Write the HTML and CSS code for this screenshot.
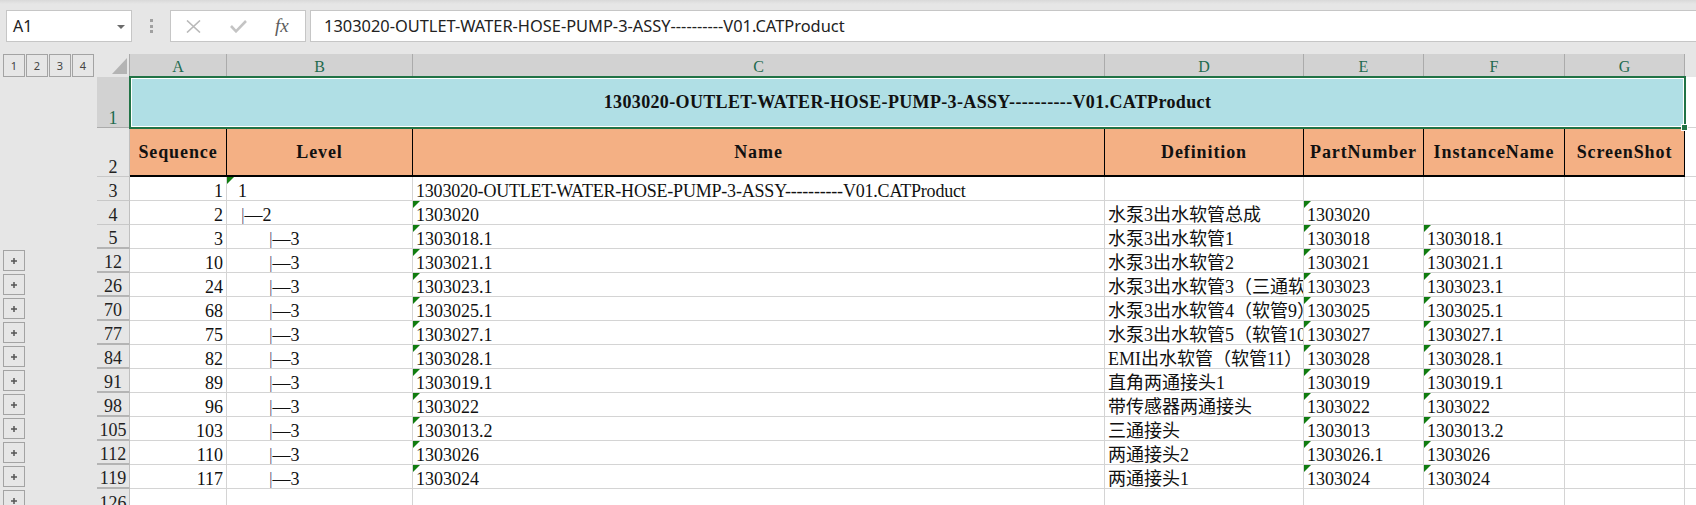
FILE: index.html
```html
<!DOCTYPE html>
<html lang="zh">
<head>
<meta charset="utf-8">
<title>Sheet</title>
<link rel="stylesheet" href="styles.css">
</head>
<body>
<div class="fbar">
  <div class="namebox"><span>A1</span><svg class="nb-arrow" width="8" height="4" viewBox="0 0 8 4"><polygon points="0,0 8,0 4,4" fill="#6b6b6b"/></svg></div>
  <div class="grip"><i></i><i></i><i></i></div>
  <div class="fxbox">
    <svg class="ic-x" width="15" height="13" viewBox="0 0 15 13"><path d="M1 0.5 L14 12.5 M14 0.5 L1 12.5" stroke="#b9b9b9" stroke-width="1.6" fill="none"/></svg>
    <svg class="ic-ok" width="17" height="14" viewBox="0 0 17 14"><path d="M1 7 L6 12.3 L16 2" stroke="#c4c4c4" stroke-width="2.6" fill="none"/></svg>
    <span class="fx">fx</span>
  </div>
  <div class="finput">1303020-OUTLET-WATER-HOSE-PUMP-3-ASSY----------V01.CATProduct</div>
</div>

<div class="sheet">
  <div class="row r-colhdr">
    <div class="ol levels"><span class="lvbtn">1</span><span class="lvbtn">2</span><span class="lvbtn">3</span><span class="lvbtn">4</span></div>
    <div class="corner"><svg width="32" height="22" viewBox="0 0 32 22"><polygon points="15,20 30,20 30,4" fill="#b4b4b4"/></svg></div>
    <div class="ch">A</div><div class="ch">B</div><div class="ch">C</div><div class="ch">D</div><div class="ch">E</div><div class="ch">F</div><div class="ch">G</div>
    <div class="ch h"></div>
  </div>

  <div class="row r-title">
    <div class="ol"></div>
    <div class="rh sel">1</div>
    <div class="title">1303020-OUTLET-WATER-HOSE-PUMP-3-ASSY----------V01.CATProduct<div class="selbox"><span class="handle"></span></div></div>
    <div class="c h"></div>
  </div>

  <div class="row r-head">
    <div class="ol"></div>
    <div class="rh">2</div>
    <div class="hd">Sequence</div><div class="hd">Level</div><div class="hd">Name</div><div class="hd">Definition</div><div class="hd">PartNumber</div><div class="hd">InstanceName</div><div class="hd">ScreenShot</div>
    <div class="c h"></div>
  </div>

  <div class="row r-data">
    <div class="ol"></div><div class="rh">3</div>
    <div class="c num">1</div><div class="c t lv1">1</div><div class="c ascii">1303020-OUTLET-WATER-HOSE-PUMP-3-ASSY----------V01.CATProduct</div>
    <div class="c"></div><div class="c"></div><div class="c"></div><div class="c"></div><div class="c h"></div>
  </div>
  <div class="row r-data">
    <div class="ol"></div><div class="rh">4</div>
    <div class="c num">2</div><div class="c lv2"><span class="bar">|</span>—2</div><div class="c t">1303020</div>
    <div class="c">水泵3出水软管总成</div><div class="c t">1303020</div><div class="c"></div><div class="c"></div><div class="c h"></div>
  </div>
  <div class="row r-data">
    <div class="ol"></div><div class="rh hid">5</div>
    <div class="c num">3</div><div class="c lv3"><span class="bar">|</span>—3</div><div class="c t">1303018.1</div>
    <div class="c">水泵3出水软管1</div><div class="c t">1303018</div><div class="c t">1303018.1</div><div class="c"></div><div class="c h"></div>
  </div>
  <div class="row r-data">
    <div class="ol plus"><span class="pbtn"><svg width="8" height="8" viewBox="0 0 8 8"><path d="M4 1 V7 M1 4 H7" stroke="#555" stroke-width="1.5"/></svg></span></div><div class="rh hid">12</div>
    <div class="c num">10</div><div class="c lv3"><span class="bar">|</span>—3</div><div class="c t">1303021.1</div>
    <div class="c">水泵3出水软管2</div><div class="c t">1303021</div><div class="c t">1303021.1</div><div class="c"></div><div class="c h"></div>
  </div>
  <div class="row r-data">
    <div class="ol plus"><span class="pbtn"><svg width="8" height="8" viewBox="0 0 8 8"><path d="M4 1 V7 M1 4 H7" stroke="#555" stroke-width="1.5"/></svg></span></div><div class="rh hid">26</div>
    <div class="c num">24</div><div class="c lv3"><span class="bar">|</span>—3</div><div class="c t">1303023.1</div>
    <div class="c">水泵3出水软管3（三通软管）</div><div class="c t">1303023</div><div class="c t">1303023.1</div><div class="c"></div><div class="c h"></div>
  </div>
  <div class="row r-data">
    <div class="ol plus"><span class="pbtn"><svg width="8" height="8" viewBox="0 0 8 8"><path d="M4 1 V7 M1 4 H7" stroke="#555" stroke-width="1.5"/></svg></span></div><div class="rh hid">70</div>
    <div class="c num">68</div><div class="c lv3"><span class="bar">|</span>—3</div><div class="c t">1303025.1</div>
    <div class="c">水泵3出水软管4（软管9）</div><div class="c t">1303025</div><div class="c t">1303025.1</div><div class="c"></div><div class="c h"></div>
  </div>
  <div class="row r-data">
    <div class="ol plus"><span class="pbtn"><svg width="8" height="8" viewBox="0 0 8 8"><path d="M4 1 V7 M1 4 H7" stroke="#555" stroke-width="1.5"/></svg></span></div><div class="rh hid">77</div>
    <div class="c num">75</div><div class="c lv3"><span class="bar">|</span>—3</div><div class="c t">1303027.1</div>
    <div class="c">水泵3出水软管5（软管10）</div><div class="c t">1303027</div><div class="c t">1303027.1</div><div class="c"></div><div class="c h"></div>
  </div>
  <div class="row r-data">
    <div class="ol plus"><span class="pbtn"><svg width="8" height="8" viewBox="0 0 8 8"><path d="M4 1 V7 M1 4 H7" stroke="#555" stroke-width="1.5"/></svg></span></div><div class="rh hid">84</div>
    <div class="c num">82</div><div class="c lv3"><span class="bar">|</span>—3</div><div class="c t">1303028.1</div>
    <div class="c">EMI出水软管（软管11）</div><div class="c t">1303028</div><div class="c t">1303028.1</div><div class="c"></div><div class="c h"></div>
  </div>
  <div class="row r-data">
    <div class="ol plus"><span class="pbtn"><svg width="8" height="8" viewBox="0 0 8 8"><path d="M4 1 V7 M1 4 H7" stroke="#555" stroke-width="1.5"/></svg></span></div><div class="rh hid">91</div>
    <div class="c num">89</div><div class="c lv3"><span class="bar">|</span>—3</div><div class="c t">1303019.1</div>
    <div class="c">直角两通接头1</div><div class="c t">1303019</div><div class="c t">1303019.1</div><div class="c"></div><div class="c h"></div>
  </div>
  <div class="row r-data">
    <div class="ol plus"><span class="pbtn"><svg width="8" height="8" viewBox="0 0 8 8"><path d="M4 1 V7 M1 4 H7" stroke="#555" stroke-width="1.5"/></svg></span></div><div class="rh hid">98</div>
    <div class="c num">96</div><div class="c lv3"><span class="bar">|</span>—3</div><div class="c t">1303022</div>
    <div class="c">带传感器两通接头</div><div class="c t">1303022</div><div class="c t">1303022</div><div class="c"></div><div class="c h"></div>
  </div>
  <div class="row r-data">
    <div class="ol plus"><span class="pbtn"><svg width="8" height="8" viewBox="0 0 8 8"><path d="M4 1 V7 M1 4 H7" stroke="#555" stroke-width="1.5"/></svg></span></div><div class="rh hid">105</div>
    <div class="c num">103</div><div class="c lv3"><span class="bar">|</span>—3</div><div class="c t">1303013.2</div>
    <div class="c">三通接头</div><div class="c t">1303013</div><div class="c t">1303013.2</div><div class="c"></div><div class="c h"></div>
  </div>
  <div class="row r-data">
    <div class="ol plus"><span class="pbtn"><svg width="8" height="8" viewBox="0 0 8 8"><path d="M4 1 V7 M1 4 H7" stroke="#555" stroke-width="1.5"/></svg></span></div><div class="rh hid">112</div>
    <div class="c num">110</div><div class="c lv3"><span class="bar">|</span>—3</div><div class="c t">1303026</div>
    <div class="c">两通接头2</div><div class="c t">1303026.1</div><div class="c t">1303026</div><div class="c"></div><div class="c h"></div>
  </div>
  <div class="row r-data">
    <div class="ol plus"><span class="pbtn"><svg width="8" height="8" viewBox="0 0 8 8"><path d="M4 1 V7 M1 4 H7" stroke="#555" stroke-width="1.5"/></svg></span></div><div class="rh hid">119</div>
    <div class="c num">117</div><div class="c lv3"><span class="bar">|</span>—3</div><div class="c t">1303024</div>
    <div class="c">两通接头1</div><div class="c t">1303024</div><div class="c t">1303024</div><div class="c"></div><div class="c h"></div>
  </div>
  <div class="row r-data">
    <div class="ol plus"><span class="pbtn"><svg width="8" height="8" viewBox="0 0 8 8"><path d="M4 1 V7 M1 4 H7" stroke="#555" stroke-width="1.5"/></svg></span></div><div class="rh">126</div>
    <div class="c"></div><div class="c"></div><div class="c"></div><div class="c"></div><div class="c"></div><div class="c"></div><div class="c"></div><div class="c h"></div>
  </div>
</div>
</body>
</html>
```

FILE: styles.css
```css
:root {
  --cols: 97px 33px 97px 186px 692px 199px 120px 141px 120px 11px;
  --green: #217346;
}
* { box-sizing: border-box; }
html, body { margin: 0; height: 100%; overflow: hidden; }
body {
  background: #e6e6e6;
  font-family: "Liberation Serif", "Noto Sans CJK SC", serif;
  color: #111;
}

/* formula bar */
.fbar {
  height: 54px;
  display: flex;
  align-items: flex-start;
  padding-top: 10px;
  background: linear-gradient(#d9d9d9, #e6e6e6 4px);
}
.namebox {
  margin-left: 6px;
  width: 126px;
  height: 32px;
  background: #fff;
  border: 1px solid #c6c6c6;
  display: flex;
  align-items: center;
  justify-content: space-between;
  padding: 0 6px 0 6px;
  font: 16px "Noto Sans", sans-serif;
  color: #222;
}
.nb-arrow { margin-top: 1px; }
.grip {
  width: 38px;
  height: 32px;
  display: flex;
  flex-direction: column;
  align-items: center;
  justify-content: center;
  gap: 2.3px;
}
.grip i { display: block; width: 3px; height: 3px; background: #a0a0a0; }
.fxbox {
  width: 136px;
  height: 32px;
  background: #fff;
  border: 1px solid #c6c6c6;
  display: flex;
  align-items: center;
  padding-left: 15px;
  gap: 28px;
}
.ic-ok { margin-left: 1px; }
.fx {
  font-family: "Liberation Serif", serif;
  font-style: italic;
  font-size: 19px;
  color: #5c5c5c;
  line-height: 20px;
}
.finput {
  margin-left: 4px;
  flex: 1;
  height: 32px;
  background: #fff;
  border: 1px solid #c6c6c6;
  border-right: none;
  padding-left: 13px;
  font: 16.4px/30px "Noto Sans", sans-serif;
  color: #222;
  white-space: nowrap;
}

/* sheet grid */
.row { display: grid; grid-template-columns: var(--cols); }
.r-colhdr { height: 23px; }
.r-title { height: 51px; }
.r-head { height: 49px; }
.r-data { height: 24px; }

.ol { background: #e6e6e6; }
.levels { display: flex; gap: 1px; padding-left: 3px; }
.lvbtn {
  width: 22px;
  height: 23px;
  border: 1px solid #a3a3a3;
  display: flex;
  align-items: center;
  justify-content: center;
  font: 11px "Noto Sans", sans-serif;
  color: #444;
}
.ol.plus { padding: 1px 0 0 3px; }
.pbtn {
  width: 22px;
  height: 21px;
  border: 1px solid #a3a3a3;
  display: flex;
  align-items: center;
  justify-content: center;
}

.corner {
  background: #e6e6e6;
  border-right: 1px solid #ababab;
  border-bottom: 1px solid #ababab;
}
.corner svg { display: block; }
.ch {
  background: #d2d2d2;
  border-right: 1px solid #ababab;
  border-bottom: 1px solid #ababab;
  text-align: center;
  color: #1f6b4f;
  font-size: 16px;
  line-height: 20px;
  padding-top: 3px;
}
.ch.h { background: #e6e6e6; border-right: none; }

.rh {
  background: #e6e6e6;
  border-right: 1px solid #bfbfbf;
  border-bottom: 1px solid #c8c8c8;
  display: flex;
  align-items: flex-end;
  justify-content: center;
  font-size: 18px;
  line-height: 17px;
  color: #222;
}
.rh.sel { background: #d2d2d2; color: #1f6b4f; border-bottom-color: #ababab; }
.rh.hid { border-bottom: 2px solid #b4b4b4; }

.title {
  grid-column: 3 / 10;
  position: relative;
  background: #b0dfe5;
  display: flex;
  align-items: center;
  justify-content: center;
  font-weight: bold;
  font-size: 18px;
  letter-spacing: 0.35px;
  white-space: nowrap;
}
.selbox {
  position: absolute;
  inset: -1px;
  border: 2px solid var(--green);
  box-shadow: inset 0 0 0 1px #fff;
}
.handle {
  position: absolute;
  right: -4px;
  bottom: -4px;
  width: 7px;
  height: 7px;
  background: var(--green);
  border: 1px solid #fff;
}

.hd {
  background: #f4b084;
  border-right: 1px solid #000;
  border-bottom: 2px solid #000;
  display: flex;
  align-items: center;
  justify-content: center;
  font-weight: bold;
  font-size: 18px;
  letter-spacing: 0.9px;
  white-space: nowrap;
  overflow: hidden;
  padding-top: 2px;
}

.c {
  background: #fff;
  border-right: 1px solid #d4d4d4;
  border-bottom: 1px solid #d4d4d4;
  display: flex;
  align-items: flex-end;
  padding: 0 4px 0 3px;
  font-size: 18px;
  line-height: 17px;
  white-space: nowrap;
  overflow: hidden;
  color: #111;
}
.c.num { justify-content: flex-end; padding-right: 3px; }
.c.h { border-right: none; }
.c.ascii { letter-spacing: -0.2px; }
.lv1 { padding-left: 11px; }
.lv2 { padding-left: 14px; }
.lv3 { padding-left: 42px; }
.bar { color: #5d5a78; }
.t { position: relative; }
.t::before {
  content: "";
  position: absolute;
  left: 0;
  top: 0;
  border-top: 7px solid #107c10;
  border-right: 7px solid transparent;
}
```
